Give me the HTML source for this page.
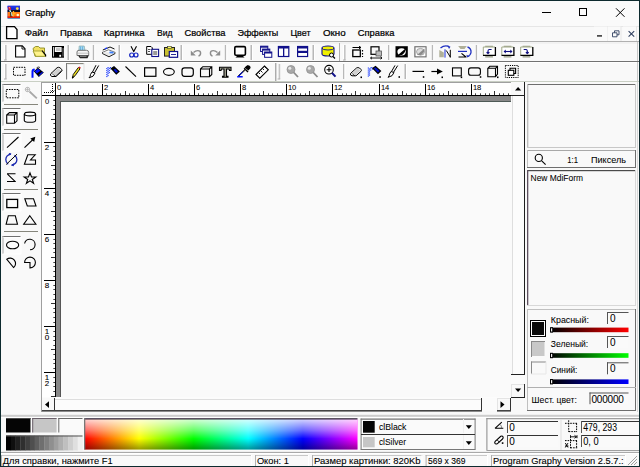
<!DOCTYPE html>
<html><head><meta charset="utf-8"><style>
html,body{margin:0;padding:0;width:640px;height:467px;overflow:hidden;background:#f9f9f9}
svg{display:block}
text{font-family:"Liberation Sans", sans-serif;stroke:currentColor;stroke-width:0.22px}
</style></head><body>
<svg width="640" height="467" viewBox="0 0 640 467">
<rect x="0" y="0" width="640" height="467" fill="#f9f9f9" />
<rect x="1" y="1" width="638" height="25" fill="#fafafa" />
<g>
<rect x="7.6" y="5.8" width="12.4" height="12.6" fill="#1a2ad0"/>
<rect x="7.6" y="5.8" width="12.4" height="2" fill="#2038e8"/>
<rect x="7.6" y="10" width="12.4" height="2.2" fill="#101020"/>
<rect x="7.6" y="12" width="12.4" height="5" fill="#ff7a10"/>
<rect x="7.6" y="16.3" width="12.4" height="1.8" fill="#e02010"/>
<path d="M8 7 L10.3 6.5 L11.2 9.5 L9 10.5 Z" fill="#f02020"/>
<path d="M9.2 8 L9.8 7.5" stroke="#fff" stroke-width="1"/>
<path d="M9.8 10 L12.2 16" stroke="#bff" stroke-width="1.3"/>
<path d="M10.5 12 L11 17" stroke="#000" stroke-width="0.8"/>
<path d="M13.5 11 V16.5 M12.5 13.5 H15.5" stroke="#ffb020" stroke-width="1.3"/>
<circle cx="17.3" cy="8.6" r="1.4" fill="#ffe040"/>
<circle cx="17.8" cy="15" r="1.3" fill="#fff8d0"/>
<rect x="7.6" y="18" width="12.4" height="0.6" fill="#40a0c0"/>
</g>
<text x="24.9" y="16" font-size="9.5" fill="#000"  textLength="30.3" lengthAdjust="spacingAndGlyphs">Graphy</text>
<rect x="542" y="12" width="9" height="1" fill="#000"/>
<rect x="579.5" y="8.5" width="7" height="7" fill="none" stroke="#000" stroke-width="1"/>
<path d="M616 8.3 L624.5 16.8 M624.5 8.3 L616 16.8" stroke="#000" stroke-width="1"/>
<rect x="1" y="26" width="638" height="1" fill="#e6e6e6"/>
<path d="M6.6 26.6 H14.5 L17 29.5 V38.6 H6.6 Z" fill="#fff" stroke="#000" stroke-width="1.3"/>
<text x="24.7" y="36" font-size="9.5" fill="#000"  textLength="23.4" lengthAdjust="spacingAndGlyphs">Файл</text>
<text x="60" y="36" font-size="9.5" fill="#000"  textLength="32" lengthAdjust="spacingAndGlyphs">Правка</text>
<text x="103.8" y="36" font-size="9.5" fill="#000"  textLength="40.75" lengthAdjust="spacingAndGlyphs">Картинка</text>
<text x="157" y="36" font-size="9.5" fill="#000"  textLength="15.5" lengthAdjust="spacingAndGlyphs">Вид</text>
<text x="184.5" y="36" font-size="9.5" fill="#000"  textLength="41" lengthAdjust="spacingAndGlyphs">Свойства</text>
<text x="237.5" y="36" font-size="9.5" fill="#000"  textLength="40.75" lengthAdjust="spacingAndGlyphs">Эффекты</text>
<text x="290.5" y="36" font-size="9.5" fill="#000"  textLength="20" lengthAdjust="spacingAndGlyphs">Цвет</text>
<text x="322.9" y="36" font-size="9.5" fill="#000"  textLength="22.7" lengthAdjust="spacingAndGlyphs">Окно</text>
<text x="357.8" y="36" font-size="9.5" fill="#000"  textLength="36.6" lengthAdjust="spacingAndGlyphs">Справка</text>
<rect x="594" y="26.5" width="13" height="14" fill="#fafafa" />
<rect x="607" y="27" width="1" height="14" fill="#e8e8e8"/>
<rect x="607.5" y="26.5" width="13" height="14" fill="#fafafa" />
<rect x="620.5" y="27" width="1" height="14" fill="#e8e8e8"/>
<rect x="623" y="26.5" width="13" height="14" fill="#fafafa" />
<rect x="636" y="27" width="1" height="14" fill="#e8e8e8"/>
<rect x="597" y="35.2" width="5" height="1.4" fill="#222"/>
<path d="M612.5 32.8 h4.5 v4 h-4.5 z M614.5 32.8 v-2 h4.5 v4 h-2" fill="none" stroke="#304060" stroke-width="0.9"/>
<path d="M628.6 31.2 L634.2 36.6 M634.2 31.2 L628.6 36.6" stroke="#304060" stroke-width="1.1"/>
<rect x="1" y="41" width="638" height="1" fill="#b0b0b0"/>
<rect x="1" y="42.5" width="638" height="1" fill="#ececec"/>
<rect x="1" y="61" width="638" height="1" fill="#727272"/>
<rect x="1" y="62" width="638" height="1" fill="#ffffff"/>
<rect x="1" y="81" width="638" height="1" fill="#c9cfc4"/>
<rect x="637" y="42" width="1" height="19" fill="#c8c8c8"/>
<rect x="637" y="62" width="1" height="19" fill="#c8c8c8"/>
<rect x="4" y="45" width="1" height="15" fill="#ffffff"/>
<rect x="5" y="45" width="1.6" height="15" fill="#c4c4c4"/>
<rect x="4" y="59.5" width="2.5999999999999996" height="1" fill="#b0b0b0"/>
<rect x="4" y="64" width="1" height="15" fill="#ffffff"/>
<rect x="5" y="64" width="1.6" height="15" fill="#c4c4c4"/>
<rect x="4" y="78.5" width="2.5999999999999996" height="1" fill="#b0b0b0"/>
<rect x="67.5" y="45" width="1.5" height="15" fill="#b8b8b8"/>
<rect x="69" y="45" width="1" height="15" fill="#ffffff"/>
<rect x="92.8" y="45" width="1.5" height="15" fill="#b8b8b8"/>
<rect x="94.3" y="45" width="1" height="15" fill="#ffffff"/>
<rect x="118.5" y="45" width="1.5" height="15" fill="#b8b8b8"/>
<rect x="120" y="45" width="1" height="15" fill="#ffffff"/>
<rect x="180.5" y="45" width="1.5" height="15" fill="#b8b8b8"/>
<rect x="182" y="45" width="1" height="15" fill="#ffffff"/>
<rect x="224.8" y="45" width="1.5" height="15" fill="#b8b8b8"/>
<rect x="226.3" y="45" width="1" height="15" fill="#ffffff"/>
<rect x="250.5" y="45" width="1.5" height="15" fill="#b8b8b8"/>
<rect x="252" y="45" width="1" height="15" fill="#ffffff"/>
<rect x="312.5" y="45" width="1.5" height="15" fill="#b8b8b8"/>
<rect x="314" y="45" width="1" height="15" fill="#ffffff"/>
<rect x="339" y="43" width="1" height="18" fill="#b0b0b0"/>
<rect x="343" y="45" width="1" height="15" fill="#ffffff"/>
<rect x="344" y="45" width="1.6" height="15" fill="#c4c4c4"/>
<rect x="343" y="59.5" width="2.6000000000000227" height="1" fill="#b0b0b0"/>
<rect x="388.0" y="45" width="1.5" height="15" fill="#b8b8b8"/>
<rect x="389.5" y="45" width="1" height="15" fill="#ffffff"/>
<rect x="431.8" y="45" width="1.5" height="15" fill="#b8b8b8"/>
<rect x="433.3" y="45" width="1" height="15" fill="#ffffff"/>
<rect x="475.8" y="45" width="1.5" height="15" fill="#b8b8b8"/>
<rect x="477.3" y="45" width="1" height="15" fill="#ffffff"/>
<path d="M15.6 45.9 H22.3 L25 48.7 V57 H15.6 Z" fill="#fff" stroke="#000" stroke-width="1.1"/>
<path d="M22 46 V49 H25" fill="none" stroke="#000" stroke-width="0.9"/>
<path d="M33 48.5 L35.5 46.5 L38.5 46.5 L40 48 L44.5 48 L44.5 56.3 L35 56.3 Z" fill="#f2e060" stroke="#8a8a20" stroke-width="0.9"/>
<path d="M33 51 L42 51 L45.5 56.3 L36 56.3 Z" fill="#fff38a" stroke="#9a9a30" stroke-width="0.8"/>
<path d="M42 50.5 L45.6 55 L45.6 56.5" stroke="#000" stroke-width="1.2" fill="none"/>
<rect x="52" y="46" width="12" height="11.7" fill="#000"/>
<rect x="53" y="47" width="1" height="9.5" fill="#c8c8c8"/>
<rect x="62.6" y="48" width="0.9" height="8.5" fill="#909090"/>
<rect x="54.8" y="47.1" width="6.8" height="4.9" fill="#fff"/>
<rect x="56" y="48.1" width="4.5" height="3" fill="#c4c4c4"/>
<rect x="59.3" y="54.8" width="1.8" height="2" fill="#fff"/>
<path d="M78.8 50.5 L79.2 46 H84.2 L85 50.5 Z" fill="#a8d8f0" stroke="#8aa" stroke-width="0.7"/>
<path d="M80.5 46.5 V50 M82.5 46.5 V50" stroke="#60b0e0" stroke-width="0.8"/>
<path d="M77 52 Q77 50.3 79 50.3 H86.5 Q88.7 50.3 88.7 52.5 V55.5 H77 Z" fill="#f4f4f4" stroke="#555" stroke-width="0.8"/>
<path d="M77 53.2 H88.5" stroke="#aaa" stroke-width="0.7"/>
<path d="M78 55.5 H88.7 L87.5 58.3 H80 Z" fill="#222"/>
<path d="M80 56.3 H86.5" stroke="#ddd" stroke-width="0.6"/>
<path d="M102.5 52.3 L108.5 49.8 L115 52.3 L109 55.3 Z" fill="#fff" stroke="#444" stroke-width="0.7"/>
<path d="M102.5 52.3 V53.6 L109 56.8 L115 53.6 V52.3" fill="#e8e8e8" stroke="#111" stroke-width="0.9"/>
<path d="M102.8 50 L110 47 L114.5 49" fill="none" stroke="#111" stroke-width="1"/>
<path d="M104.8 48.9 L107.2 47.9" stroke="#2040ff" stroke-width="1.2"/>
<path d="M109.5 52.3 L113.5 52.6" stroke="#3a80ff" stroke-width="1.8"/>
<path d="M131 46.3 L134 52 M136.5 46.3 L133.5 52" stroke="#000" stroke-width="1.1"/>
<circle cx="131.7" cy="55" r="2" fill="none" stroke="#1020c0" stroke-width="1.2"/>
<circle cx="136" cy="55" r="2" fill="none" stroke="#1020c0" stroke-width="1.2"/>
<path d="M146.7 46.5 H151 L152.3 47.8 V54.3 H146.7 Z" fill="#fff" stroke="#000" stroke-width="1"/>
<path d="M148 49.5 H150.5 M148 51.5 H150" stroke="#000" stroke-width="0.7"/>
<rect x="151.8" y="49.3" width="6.8" height="7.2" fill="#fff" stroke="#10108a" stroke-width="1.1"/>
<path d="M153.2 52 H157.2 M153.2 54 H157.2" stroke="#000" stroke-width="0.8"/>
<rect x="164.5" y="47.5" width="10" height="8.6" fill="#c8c030" stroke="#222" stroke-width="1"/>
<rect x="167.5" y="46.3" width="4" height="2.2" fill="#ffff60" stroke="#333" stroke-width="0.6"/>
<rect x="169.3" y="51.5" width="8.3" height="5.8" fill="#fff" stroke="#10108a" stroke-width="1.2"/>
<path d="M171 54.5 H176" stroke="#10108a" stroke-width="0.9"/>
<path d="M190.8 50.6 L195.8 55.6 H190.8 Z" fill="#8c8c8c"/>
<path d="M193.5 52.6 Q195.5 50.6 197.8 50.6 Q200.6 50.6 200.6 53 Q200.6 55.6 198.5 56" fill="none" stroke="#8c8c8c" stroke-width="1.4"/>
<path d="M220.2 50.6 L215.2 55.6 H220.2 Z" fill="#8c8c8c"/>
<path d="M217.5 52.6 Q215.5 50.6 213.2 50.6 Q210.4 50.6 210.4 53 Q210.4 55.6 212.5 56" fill="none" stroke="#8c8c8c" stroke-width="1.4"/>
<rect x="234.8" y="46.6" width="10.6" height="8.6" rx="1.2" fill="#fff" stroke="#000" stroke-width="1.6"/>
<path d="M237.5 55.5 H242.5 L244.5 57.5 H235.5 Z" fill="#000"/>
<rect x="260.6" y="46.2" width="7.2" height="5.3" fill="#fff" stroke="#10108a" stroke-width="1"/>
<rect x="260.6" y="46.2" width="7.2" height="1.5" fill="#10108a"/>
<rect x="262.6" y="49.1" width="7.2" height="5.3" fill="#fff" stroke="#10108a" stroke-width="1"/>
<rect x="262.6" y="49.1" width="7.2" height="1.5" fill="#10108a"/>
<rect x="264.6" y="52" width="7.2" height="5.3" fill="#fff" stroke="#10108a" stroke-width="1"/>
<rect x="264.6" y="52" width="7.2" height="1.5" fill="#10108a"/>
<rect x="278.4" y="46.5" width="10.4" height="10" fill="#fff" stroke="#10108a" stroke-width="1.2"/>
<rect x="278.4" y="46.5" width="10.4" height="2" fill="#10108a"/>
<rect x="283" y="46.5" width="1.3" height="10" fill="#10108a"/>
<rect x="297.6" y="46.5" width="10" height="10" fill="#fff" stroke="#10108a" stroke-width="1.2"/>
<rect x="297.6" y="46.5" width="10" height="2" fill="#10108a"/>
<rect x="297.6" y="50.8" width="10" height="2.2" fill="#10108a"/>
<path d="M322 48 Q322 46 328 46 Q334 46 334 48 V54 Q334 56 328 56 Q322 56 322 54 Z" fill="#f0f000" stroke="#10108a" stroke-width="1.1"/>
<path d="M322 48 Q322 50 328 50 Q334 50 334 48" fill="none" stroke="#10108a" stroke-width="0.9"/>
<circle cx="331.5" cy="55" r="2" fill="#fff" stroke="#000" stroke-width="1"/><path d="M333 56.5 L335 58.5" stroke="#000" stroke-width="1.3"/>
<path d="M352.5 47.5 H361 M359 46.3 L361 47.5 L359 48.7" stroke="#000" stroke-width="1" fill="none"/>
<rect x="352.8" y="50" width="7.5" height="6.6" fill="none" stroke="#000" stroke-width="1.3"/>
<path d="M362.5 50 V51.5 M362.5 53 V54.5 M362.5 56 V57" stroke="#000" stroke-width="1.2"/>
<rect x="371" y="46.8" width="8" height="7.5" fill="none" stroke="#000" stroke-width="1.2"/>
<rect x="376" y="51" width="5.5" height="5" fill="#bbb" stroke="#555" stroke-width="0.8"/>
<path d="M370.5 58 H382 M372 56.8 L370.5 58 L372 59.2 M380.5 56.8 L382 58 L380.5 59.2" stroke="#000" stroke-width="0.9" fill="none"/>
<rect x="395.5" y="46.2" width="12.3" height="11.2" fill="#000"/>
<ellipse cx="401.6" cy="51.8" rx="4.2" ry="3.6" fill="#fff"/>
<path d="M398 55 L405.5 48.5 Q406 52 402 55 Z" fill="#000"/>
<rect x="414.3" y="46.2" width="12.3" height="11.2" fill="#6a6a6a"/>
<rect x="415.5" y="47.3" width="10" height="9" fill="#fff"/>
<ellipse cx="420.5" cy="51.8" rx="4" ry="3.4" fill="#ddd" stroke="#888" stroke-width="0.7"/>
<path d="M417 55 L424.5 48.5 Q425 52 421 55 Z" fill="#8a8a8a"/>
<path d="M439.3 50 L443.8 52.5 V57.3 H439.3 Z" fill="#b0b098"/>
<rect x="444.4" y="49.3" width="1.2" height="8.3" fill="#4050e0"/>
<path d="M446.3 50.5 L450.3 57 M450.3 49.8 V57.6" fill="none" stroke="#000" stroke-width="1"/>
<path d="M440.5 48 Q444.5 44.8 449 46.5" fill="none" stroke="#2030c0" stroke-width="1.3"/><path d="M447.3 45.3 L450.5 46.8 L449 49 Z" fill="#2030c0"/>
<path d="M458.2 46 H466.8 L464.5 49 H460.5 Z" fill="#b0b098"/>
<rect x="458" y="50.8" width="9" height="1.2" fill="#2030c0"/>
<path d="M458.5 57 H466.5 M461.5 53.3 L466 57" fill="none" stroke="#000" stroke-width="1.1"/>
<path d="M467.5 46.8 Q471.5 48.5 471 52.5 Q470.5 55.5 467.5 56.5" fill="none" stroke="#2030c0" stroke-width="1.3"/><path d="M466.3 54.8 L467.3 57.5 L469.6 56.3 Z" fill="#2030c0"/>
<rect x="485.2" y="45.7" width="7.7" height="1.4" fill="#a8ac98"/>
<rect x="485.2" y="55.9" width="7.7" height="1.7" fill="#a8ac98"/>
<rect x="483.3" y="47" width="12.2" height="8.5" fill="#fff"/>
<path d="M483.3 55.3 V47 H495.0" fill="none" stroke="#a0a888" stroke-width="1"/>
<path d="M483.0 55.3 H495.40000000000003 V47" fill="none" stroke="#000" stroke-width="1.3"/>
<path d="M491.6 49.5 H489.1 Q488.0 49.7 488.0 51.2 V53.3 M486.6 52.3 L488.0 53.5 L489.40000000000003 52.3" fill="none" stroke="#101080" stroke-width="1.2"/>
<rect x="503.7" y="45.7" width="7.7" height="1.4" fill="#a8ac98"/>
<rect x="503.7" y="55.9" width="7.7" height="1.7" fill="#a8ac98"/>
<rect x="501.8" y="47" width="12.2" height="8.5" fill="#fff"/>
<path d="M501.8 55.3 V47 H513.5" fill="none" stroke="#a0a888" stroke-width="1"/>
<path d="M501.5 55.3 H513.9 V47" fill="none" stroke="#000" stroke-width="1.3"/>
<path d="M504.3 51.5 H511.8" stroke="#101080" stroke-width="1.1"/><path d="M503.6 51.5 L505.8 49.6 V53.4 Z M512.5 51.5 L510.3 49.6 V53.4 Z" fill="#101080"/>
<rect x="522.6" y="45.7" width="7.7" height="1.4" fill="#a8ac98"/>
<rect x="522.6" y="55.9" width="7.7" height="1.7" fill="#a8ac98"/>
<rect x="520.7" y="47" width="12.2" height="8.5" fill="#fff"/>
<path d="M520.7 55.3 V47 H532.4000000000001" fill="none" stroke="#a0a888" stroke-width="1"/>
<path d="M520.4000000000001 55.3 H532.8000000000001 V47" fill="none" stroke="#000" stroke-width="1.3"/>
<path d="M523.7 49.5 H526.2 Q527.3000000000001 49.7 527.3000000000001 51.2 V53.3 M525.9000000000001 52.3 L527.3000000000001 53.5 L528.7 52.3" fill="none" stroke="#101080" stroke-width="1.2"/>
<rect x="66.5" y="63.5" width="18.5" height="16" fill="#fbfbfb" />
<rect x="66" y="63" width="18" height="1" fill="#8a8a80"/>
<rect x="66" y="63" width="1" height="17" fill="#7a7a7a"/>
<rect x="67" y="64" width="17" height="1" fill="#ececec"/>
<rect x="67" y="64" width="1" height="16" fill="#ececec"/>
<rect x="83.5" y="63" width="1" height="17" fill="#e0e0e0"/>
<rect x="66" y="79.5" width="18" height="1" fill="#ffffff"/>
<rect x="275.3" y="63" width="1" height="18" fill="#8c8c8c"/>
<rect x="277.6" y="64" width="1" height="15" fill="#ffffff"/>
<rect x="278.6" y="64" width="1.6" height="15" fill="#c4c4c4"/>
<rect x="277.6" y="78.5" width="2.6000000000000227" height="1" fill="#b0b0b0"/>
<rect x="343.0" y="64" width="1.5" height="15" fill="#b8b8b8"/>
<rect x="344.5" y="64" width="1" height="15" fill="#ffffff"/>
<rect x="404.5" y="64" width="1.5" height="15" fill="#b8b8b8"/>
<rect x="406" y="64" width="1" height="15" fill="#ffffff"/>
<rect x="13.5" y="67.3" width="11.5" height="8" fill="none" stroke="#000" stroke-width="1" stroke-dasharray="1.6 1"/>
<path d="M34.5 68.6 Q31.5 68.8 31.5 71.5 V77.8 H33.5 V72 Q33.5 70.5 35 70.3 Z" fill="#0010ff"/>
<path d="M38 67.8 L43.8 72.4 L38.8 77 L33.8 71.2 Z" fill="#000"/>
<path d="M34.8 71.2 L38 68.8 L40.5 70.8 L36.8 73.6 Z" fill="#0010ff"/>
<path d="M39.2 76 L43 72.5 L42.2 71.8 L38.4 75.2 Z" fill="#0010ff"/>
<path d="M36.5 68 Q38 66.2 40 67.5" fill="none" stroke="#333" stroke-width="0.9"/>
<path d="M50.5 74 L57 67.8 Q58.5 66.8 60 67.8 L61.8 69.5 Q62.5 70.5 61.5 71.5 L56 76.5 H52 Q50 76 50.5 74 Z" fill="#fff" stroke="#000" stroke-width="1"/>
<path d="M51.5 73 L55 76 M55 76.5 L61.5 70.5" fill="none" stroke="#000" stroke-width="0.8"/>
<path d="M52 73.5 L58 68 L61 70.5 L55.5 75.8 Z" fill="#d0d0d0"/>
<path d="M72.5 78 L73.2 74.5 L78.3 67.5 L80 68.8 L75 75.8 Z" fill="#f0e020" stroke="#000" stroke-width="0.9"/>
<path d="M78.3 67.5 L79.3 66.5 L80.8 67.6 L80 68.8 Z" fill="#e02020"/>
<path d="M72.3 78.2 L73.3 76.4" stroke="#000" stroke-width="1.2"/>
<path d="M92.5 72 L96 65.2 M94.5 72.8 L98.7 65.5" stroke="#000" stroke-width="1"/>
<path d="M92 72 L95 73 Q94 77 89 77.8 Q90.5 76.5 90.5 74.5 Z" fill="#fff" stroke="#000" stroke-width="1"/>
<rect x="106.3" y="68" width="1.1" height="1.1" fill="#1030ff"/>
<rect x="106.3" y="70" width="1.1" height="1.1" fill="#1030ff"/>
<rect x="106.3" y="72" width="1.1" height="1.1" fill="#1030ff"/>
<rect x="106.3" y="74" width="1.1" height="1.1" fill="#1030ff"/>
<rect x="106.3" y="76" width="1.1" height="1.1" fill="#1030ff"/>
<rect x="107.5" y="67" width="1.1" height="1.1" fill="#1030ff"/>
<rect x="107.5" y="69" width="1.1" height="1.1" fill="#1030ff"/>
<rect x="107.5" y="71" width="1.1" height="1.1" fill="#1030ff"/>
<rect x="107.5" y="73" width="1.1" height="1.1" fill="#1030ff"/>
<rect x="107.5" y="75" width="1.1" height="1.1" fill="#1030ff"/>
<rect x="108.7" y="68" width="1.1" height="1.1" fill="#1030ff"/>
<rect x="108.7" y="70" width="1.1" height="1.1" fill="#1030ff"/>
<rect x="108.7" y="72" width="1.1" height="1.1" fill="#1030ff"/>
<rect x="109.8" y="67" width="1.1" height="1.1" fill="#1030ff"/>
<rect x="110.5" y="68.5" width="1.1" height="1.1" fill="#1030ff"/>
<path d="M111.5 68.5 L114 66.8 L119 71.5 L116.3 73.8 Z" fill="#0010d0" stroke="#000" stroke-width="1.2"/>
<path d="M111.8 68.6 L114 67 L115.5 68.5 L113 70.3 Z" fill="#000"/>
<path d="M125.5 66.5 L136 76.6" stroke="#000" stroke-width="1.1"/>
<rect x="144.6" y="67.8" width="11.3" height="8.5" fill="none" stroke="#000" stroke-width="1.2"/>
<ellipse cx="168.9" cy="71.85" rx="5.4" ry="3.5" fill="none" stroke="#000" stroke-width="1.1"/>
<rect x="182" y="67.8" width="11.3" height="8.5" rx="2.5" fill="none" stroke="#000" stroke-width="1.2"/>
<path d="M200.5 69 L202.8 66.7 H211.8 V74.5 L209.5 76.8 H200.5 Z M200.5 69 H209.5 V76.8 M209.5 69 L211.8 66.7" fill="none" stroke="#000" stroke-width="1.1"/>
<path d="M219.5 67.2 H231 V70.5 H229.5 L229 69 H226.5 V76.2 H228 V77.3 H222.5 V76.2 H224 V69 H221.5 L221 70.5 H219.5 Z" fill="#a0a090" stroke="#000" stroke-width="1.1"/>
<path d="M245.5 67.5 L247.5 65.8 Q249.8 65.5 250 67.8 L248.3 69.6 Z" fill="#000" stroke="#000" stroke-width="1.2"/>
<path d="M244.2 68.3 L248 72 " stroke="#000" stroke-width="1.4"/>
<path d="M245.5 69.8 L239 76 L238.3 76.2 L238.5 75.5 L245 69.3 Z" fill="#fff" stroke="#000" stroke-width="0.9"/>
<rect x="237.2" y="76" width="5.5" height="1.5" fill="#0010ff"/>
<path d="M239 75.5 L242.8 71.8" stroke="#0010ff" stroke-width="1"/>
<path d="M256 74.5 L264.5 66 L268.3 69.8 L259.8 78.2 Z" fill="#fff" stroke="#000" stroke-width="1.1"/>
<path d="M259 73 L260 74 M261 71 L262.5 72.5 M263 69 L264 70 M265 67 L266.5 68.5" stroke="#000" stroke-width="0.9"/>
<circle cx="291.0" cy="69.5" r="4" fill="#a8a8a8" stroke="#909090" stroke-width="0.8"/>
<circle cx="289.8" cy="68.3" r="1.5" fill="#e8e8e8"/>
<path d="M293.8 72.5 L298.0 77" stroke="#8a8a8a" stroke-width="1.8"/>
<circle cx="310.5" cy="69.5" r="4" fill="#a8a8a8" stroke="#909090" stroke-width="0.8"/>
<circle cx="309.3" cy="68.3" r="1.5" fill="#e8e8e8"/>
<path d="M313.3 72.5 L317.5 77" stroke="#8a8a8a" stroke-width="1.8"/>
<circle cx="329" cy="69.7" r="4.3" fill="#fff" stroke="#000" stroke-width="1.1"/>
<path d="M326.6 69.7 H331.4 M329 67.3 V72.1" stroke="#000" stroke-width="1.1"/>
<path d="M332 72.8 L335.5 76.7" stroke="#10108a" stroke-width="2"/>
<path d="M350.5 73.5 L356.5 68 Q358 67.2 359.5 68 L361 69.5 Q361.8 70.5 361 71.3 L356 75.8 H352 Q350 75.5 350.5 73.5 Z" fill="#fff" stroke="#000" stroke-width="1"/>
<path d="M351.5 72.8 L354.8 75.8" stroke="#000" stroke-width="0.8"/><path d="M352 73.3 L357.5 68.3 L360.5 70.6 L355.5 75.3 Z" fill="#d0d0d0"/>
<rect x="360.5" y="76.5" width="1.5" height="1.6" fill="#000"/>
<rect x="367.8" y="67.5" width="1.1" height="1.1" fill="#1030ff"/>
<rect x="367.8" y="69.5" width="1.1" height="1.1" fill="#1030ff"/>
<rect x="367.8" y="71.5" width="1.1" height="1.1" fill="#1030ff"/>
<rect x="367.8" y="73.5" width="1.1" height="1.1" fill="#1030ff"/>
<rect x="367.8" y="75.5" width="1.1" height="1.1" fill="#1030ff"/>
<rect x="369" y="68.5" width="1.1" height="1.1" fill="#1030ff"/>
<rect x="369" y="70.5" width="1.1" height="1.1" fill="#1030ff"/>
<rect x="369" y="72.5" width="1.1" height="1.1" fill="#1030ff"/>
<rect x="369" y="74.5" width="1.1" height="1.1" fill="#1030ff"/>
<rect x="370.2" y="67.5" width="1.1" height="1.1" fill="#1030ff"/>
<rect x="370.2" y="69.5" width="1.1" height="1.1" fill="#1030ff"/>
<rect x="371.3" y="67" width="1.1" height="1.1" fill="#1030ff"/>
<rect x="372" y="68.5" width="1.1" height="1.1" fill="#1030ff"/>
<path d="M373 68.3 L375.5 66.6 L380.5 71 L378 73.3 Z" fill="#0010d0" stroke="#000" stroke-width="1.2"/>
<rect x="379.3" y="76.2" width="1.5" height="1.6" fill="#000"/>
<path d="M391.5 71.5 L395 65.4 M393.5 72.3 L397.7 65.6" stroke="#000" stroke-width="1"/>
<path d="M391 71.5 L394 72.5 Q393 76.5 388 77.3 Q389.5 76 389.5 74 Z" fill="#fff" stroke="#000" stroke-width="1"/>
<rect x="398.5" y="76.2" width="1.5" height="1.6" fill="#000"/>
<path d="M412.5 71.4 H424" stroke="#000" stroke-width="1.2"/>
<rect x="422.8" y="76.2" width="1.5" height="1.6" fill="#000"/>
<path d="M431.4 71.5 H440" stroke="#000" stroke-width="1.2"/><path d="M437 68.6 L442.8 71.5 L437 74.4 Z" fill="#000"/>
<rect x="441.5" y="76.5" width="1.5" height="1.6" fill="#000"/>
<rect x="452.5" y="67.9" width="8.8" height="8" fill="none" stroke="#000" stroke-width="1.1"/>
<rect x="460.7" y="76.5" width="1.5" height="1.6" fill="#000"/>
<rect x="468.6" y="67.9" width="11.8" height="7.4" rx="2.3" fill="none" stroke="#000" stroke-width="1.1"/>
<rect x="479.8" y="76.2" width="1.5" height="1.6" fill="#000"/>
<path d="M487.8 68.3 L489.8 66.3 H497.5 V74 L495.5 76.8 H487.8 Z M487.8 68.3 H495.5 V76.8 M495.5 68.3 L497.5 66.3" fill="none" stroke="#000" stroke-width="1.1"/>
<rect x="497" y="76.5" width="1.5" height="1.6" fill="#000"/>
<rect x="505.4" y="65.5" width="12.8" height="12" fill="none" stroke="#000" stroke-width="1" stroke-dasharray="1.2 1"/>
<rect x="508.3" y="70.3" width="5.5" height="5" fill="#fff" stroke="#000" stroke-width="1.1"/>
<path d="M510 70.3 V68.3 H515.6 V73.5 H513.8" fill="none" stroke="#000" stroke-width="1.1"/>
<rect x="2.5" y="84" width="18.5" height="18" fill="#fbfbfb" />
<rect x="2.5" y="84" width="18.5" height="1" fill="#707070"/>
<rect x="2.5" y="84" width="1" height="18" fill="#a8a8a8"/>
<rect x="3.5" y="85" width="17.5" height="1" fill="#ffffff"/>
<rect x="2.5" y="101.5" width="18.5" height="1" fill="#ffffff"/>
<rect x="20.5" y="84" width="1" height="18" fill="#ffffff"/>
<rect x="2.5" y="108" width="18.5" height="18" fill="#fbfbfb" />
<rect x="2.5" y="108" width="18.5" height="1" fill="#707070"/>
<rect x="2.5" y="108" width="1" height="18" fill="#a8a8a8"/>
<rect x="3.5" y="109" width="17.5" height="1" fill="#ffffff"/>
<rect x="2.5" y="125.5" width="18.5" height="1" fill="#ffffff"/>
<rect x="20.5" y="108" width="1" height="18" fill="#ffffff"/>
<rect x="2.5" y="133" width="18.5" height="18" fill="#fbfbfb" />
<rect x="2.5" y="133" width="18.5" height="1" fill="#707070"/>
<rect x="2.5" y="133" width="1" height="18" fill="#a8a8a8"/>
<rect x="3.5" y="134" width="17.5" height="1" fill="#ffffff"/>
<rect x="2.5" y="150.5" width="18.5" height="1" fill="#ffffff"/>
<rect x="20.5" y="133" width="1" height="18" fill="#ffffff"/>
<rect x="2.5" y="193" width="18.5" height="18" fill="#fbfbfb" />
<rect x="2.5" y="193" width="18.5" height="1" fill="#707070"/>
<rect x="2.5" y="193" width="1" height="18" fill="#a8a8a8"/>
<rect x="3.5" y="194" width="17.5" height="1" fill="#ffffff"/>
<rect x="2.5" y="210.5" width="18.5" height="1" fill="#ffffff"/>
<rect x="20.5" y="193" width="1" height="18" fill="#ffffff"/>
<rect x="2.5" y="236" width="18.5" height="18" fill="#fbfbfb" />
<rect x="2.5" y="236" width="18.5" height="1" fill="#707070"/>
<rect x="2.5" y="236" width="1" height="18" fill="#a8a8a8"/>
<rect x="3.5" y="237" width="17.5" height="1" fill="#ffffff"/>
<rect x="2.5" y="253.5" width="18.5" height="1" fill="#ffffff"/>
<rect x="20.5" y="236" width="1" height="18" fill="#ffffff"/>
<rect x="4" y="104" width="34" height="1" fill="#86867c"/>
<rect x="4" y="129" width="34" height="1" fill="#86867c"/>
<rect x="4" y="189" width="34" height="1" fill="#86867c"/>
<rect x="4" y="231" width="34" height="1" fill="#86867c"/>
<rect x="6.3" y="89.5" width="12.5" height="8.3" fill="none" stroke="#000" stroke-width="1" stroke-dasharray="1.6 1"/>
<circle cx="27.5" cy="89.5" r="2.2" fill="none" stroke="#b0b0b0" stroke-width="0.9"/>
<path d="M25.3 89.5 H29.7 M27.5 87.3 V91.7" stroke="#b0b0b0" stroke-width="0.7"/>
<path d="M29.5 91.5 L36.8 98.3" stroke="#a8a8a8" stroke-width="1.8"/>
<path d="M6.7 115 L9.5 112.6 H17 V120.8 L14.5 123.3 H6.7 Z M6.7 115 H14.5 V123.3 M14.5 115 L17 112.6" fill="none" stroke="#000" stroke-width="1.1"/>
<path d="M24.3 114 V120.5 Q24.3 122.3 30 122.3 Q35.6 122.3 35.6 120.5 V114" fill="none" stroke="#000" stroke-width="1.1"/>
<ellipse cx="30" cy="114" rx="5.6" ry="1.9" fill="none" stroke="#000" stroke-width="1.1"/>
<path d="M7 147.6 L18.5 137" stroke="#000" stroke-width="1.1"/>
<path d="M24.5 147.6 L33 139.5" stroke="#000" stroke-width="1.1"/><path d="M35.3 136.8 L34.2 142 L30.3 138.5 Z" fill="#000"/>
<path d="M14.5 155.2 Q17 156.8 16.9 159.8 Q16.7 164.2 11.5 165.1" fill="none" stroke="#1a28b0" stroke-width="1.3"/>
<path d="M8.2 164.2 Q5.7 162.5 5.8 159.6 Q6 155 11 154.2" fill="none" stroke="#1a28b0" stroke-width="1.3"/>
<path d="M14 163.3 L11.2 165.6 L13.8 166.3 Z M8.5 156 L11.5 153.6 L9 152.9 Z" fill="#1a28b0"/>
<path d="M6.2 164.5 L17 154.2" stroke="#000" stroke-width="1"/>
<path d="M27.8 154.8 H35.2 L30.5 160 H35.5 V164.3 H24.4 Z" fill="none" stroke="#000" stroke-width="1.1"/>
<path d="M7 173.8 H15.5 M7.5 174.2 L15 181.3 M7 181.5 H15.8" fill="none" stroke="#000" stroke-width="1.1"/>
<path d="M30 172.9 L31.5 177 H35.8 L32.3 179.5 L33.6 183.3 L30 180.8 L26.4 183.3 L27.7 179.5 L24.2 177 H28.5 Z" fill="none" stroke="#000" stroke-width="1.1"/>
<rect x="6.8" y="199.4" width="10.8" height="8.2" fill="none" stroke="#000" stroke-width="1.3"/>
<path d="M24.8 198.7 H33.5 L36 206 H27.3 Z" fill="none" stroke="#000" stroke-width="1.1"/>
<path d="M8.3 215.8 H15.3 L17.5 224.3 H6.1 Z" fill="none" stroke="#000" stroke-width="1.1"/>
<path d="M29.8 215.8 L35.9 224.3 H23.7 Z" fill="none" stroke="#000" stroke-width="1.1"/>
<ellipse cx="12.6" cy="245" rx="6.1" ry="3.8" fill="none" stroke="#000" stroke-width="1.1"/>
<path d="M24.6 243.5 A5.3 5.3 0 1 1 30 249.8" fill="none" stroke="#000" stroke-width="1.1"/>
<path d="M6.8 259.3 A5.2 5.2 0 1 1 13.6 267.6 Z" fill="none" stroke="#000" stroke-width="1.1"/>
<path d="M24.6 262.5 A5.4 5.4 0 1 1 30 267.9 V262.5 Z" fill="none" stroke="#000" stroke-width="1.1"/>
<rect x="41" y="82" width="1" height="330" fill="#a0a0a0"/>
<rect x="41" y="82" width="484" height="1" fill="#a0a0a0"/>
<rect x="42" y="83" width="469" height="13" fill="#ffffff" />
<rect x="42" y="96" width="13" height="301" fill="#ffffff" />
<rect x="56" y="96" width="455" height="6" fill="#888888" />
<rect x="56" y="96" width="5" height="301" fill="#888888" />
<rect x="60" y="101" width="451" height="1" fill="#4e5a56"/>
<rect x="60" y="101" width="1" height="296" fill="#555555"/>
<rect x="61" y="102" width="450" height="295" fill="#fafafa" />
<rect x="42" y="95" width="482" height="1" fill="#000"/>
<rect x="55" y="83" width="1" height="314" fill="#000"/>
<rect x="55" y="84" width="1" height="11" fill="#000"/>
<text x="57" y="90.1" font-size="7.6" fill="#000" style="stroke-width:0.05px" letter-spacing="-0.3">0</text>
<rect x="60" y="93.3" width="1" height="1.7000000000000028" fill="#444"/>
<rect x="65" y="93.3" width="1" height="1.7000000000000028" fill="#444"/>
<rect x="69" y="93.3" width="1" height="1.7000000000000028" fill="#444"/>
<rect x="74" y="93.3" width="1" height="1.7000000000000028" fill="#444"/>
<rect x="78" y="91" width="1" height="4" fill="#333"/>
<rect x="83" y="93.3" width="1" height="1.7000000000000028" fill="#444"/>
<rect x="88" y="93.3" width="1" height="1.7000000000000028" fill="#444"/>
<rect x="92" y="93.3" width="1" height="1.7000000000000028" fill="#444"/>
<rect x="97" y="93.3" width="1" height="1.7000000000000028" fill="#444"/>
<rect x="102" y="84" width="1" height="11" fill="#000"/>
<text x="104" y="90.1" font-size="7.6" fill="#000" style="stroke-width:0.05px" letter-spacing="-0.3">2</text>
<rect x="106" y="93.3" width="1" height="1.7000000000000028" fill="#444"/>
<rect x="111" y="93.3" width="1" height="1.7000000000000028" fill="#444"/>
<rect x="115" y="93.3" width="1" height="1.7000000000000028" fill="#444"/>
<rect x="120" y="93.3" width="1" height="1.7000000000000028" fill="#444"/>
<rect x="125" y="91" width="1" height="4" fill="#333"/>
<rect x="129" y="93.3" width="1" height="1.7000000000000028" fill="#444"/>
<rect x="134" y="93.3" width="1" height="1.7000000000000028" fill="#444"/>
<rect x="138" y="93.3" width="1" height="1.7000000000000028" fill="#444"/>
<rect x="143" y="93.3" width="1" height="1.7000000000000028" fill="#444"/>
<rect x="148" y="84" width="1" height="11" fill="#000"/>
<text x="150" y="90.1" font-size="7.6" fill="#000" style="stroke-width:0.05px" letter-spacing="-0.3">4</text>
<rect x="152" y="93.3" width="1" height="1.7000000000000028" fill="#444"/>
<rect x="157" y="93.3" width="1" height="1.7000000000000028" fill="#444"/>
<rect x="162" y="93.3" width="1" height="1.7000000000000028" fill="#444"/>
<rect x="166" y="93.3" width="1" height="1.7000000000000028" fill="#444"/>
<rect x="171" y="91" width="1" height="4" fill="#333"/>
<rect x="175" y="93.3" width="1" height="1.7000000000000028" fill="#444"/>
<rect x="180" y="93.3" width="1" height="1.7000000000000028" fill="#444"/>
<rect x="185" y="93.3" width="1" height="1.7000000000000028" fill="#444"/>
<rect x="189" y="93.3" width="1" height="1.7000000000000028" fill="#444"/>
<rect x="194" y="84" width="1" height="11" fill="#000"/>
<text x="196" y="90.1" font-size="7.6" fill="#000" style="stroke-width:0.05px" letter-spacing="-0.3">6</text>
<rect x="198" y="93.3" width="1" height="1.7000000000000028" fill="#444"/>
<rect x="203" y="93.3" width="1" height="1.7000000000000028" fill="#444"/>
<rect x="208" y="93.3" width="1" height="1.7000000000000028" fill="#444"/>
<rect x="212" y="93.3" width="1" height="1.7000000000000028" fill="#444"/>
<rect x="217" y="91" width="1" height="4" fill="#333"/>
<rect x="222" y="93.3" width="1" height="1.7000000000000028" fill="#444"/>
<rect x="226" y="93.3" width="1" height="1.7000000000000028" fill="#444"/>
<rect x="231" y="93.3" width="1" height="1.7000000000000028" fill="#444"/>
<rect x="235" y="93.3" width="1" height="1.7000000000000028" fill="#444"/>
<rect x="240" y="84" width="1" height="11" fill="#000"/>
<text x="242" y="90.1" font-size="7.6" fill="#000" style="stroke-width:0.05px" letter-spacing="-0.3">8</text>
<rect x="245" y="93.3" width="1" height="1.7000000000000028" fill="#444"/>
<rect x="249" y="93.3" width="1" height="1.7000000000000028" fill="#444"/>
<rect x="254" y="93.3" width="1" height="1.7000000000000028" fill="#444"/>
<rect x="259" y="93.3" width="1" height="1.7000000000000028" fill="#444"/>
<rect x="263" y="91" width="1" height="4" fill="#333"/>
<rect x="268" y="93.3" width="1" height="1.7000000000000028" fill="#444"/>
<rect x="272" y="93.3" width="1" height="1.7000000000000028" fill="#444"/>
<rect x="277" y="93.3" width="1" height="1.7000000000000028" fill="#444"/>
<rect x="282" y="93.3" width="1" height="1.7000000000000028" fill="#444"/>
<rect x="286" y="84" width="1" height="11" fill="#000"/>
<text x="288" y="90.1" font-size="7.6" fill="#000" style="stroke-width:0.05px" letter-spacing="-0.3">10</text>
<rect x="291" y="93.3" width="1" height="1.7000000000000028" fill="#444"/>
<rect x="295" y="93.3" width="1" height="1.7000000000000028" fill="#444"/>
<rect x="300" y="93.3" width="1" height="1.7000000000000028" fill="#444"/>
<rect x="305" y="93.3" width="1" height="1.7000000000000028" fill="#444"/>
<rect x="309" y="91" width="1" height="4" fill="#333"/>
<rect x="314" y="93.3" width="1" height="1.7000000000000028" fill="#444"/>
<rect x="319" y="93.3" width="1" height="1.7000000000000028" fill="#444"/>
<rect x="323" y="93.3" width="1" height="1.7000000000000028" fill="#444"/>
<rect x="328" y="93.3" width="1" height="1.7000000000000028" fill="#444"/>
<rect x="332" y="84" width="1" height="11" fill="#000"/>
<text x="334" y="90.1" font-size="7.6" fill="#000" style="stroke-width:0.05px" letter-spacing="-0.3">12</text>
<rect x="337" y="93.3" width="1" height="1.7000000000000028" fill="#444"/>
<rect x="342" y="93.3" width="1" height="1.7000000000000028" fill="#444"/>
<rect x="346" y="93.3" width="1" height="1.7000000000000028" fill="#444"/>
<rect x="351" y="93.3" width="1" height="1.7000000000000028" fill="#444"/>
<rect x="355" y="91" width="1" height="4" fill="#333"/>
<rect x="360" y="93.3" width="1" height="1.7000000000000028" fill="#444"/>
<rect x="365" y="93.3" width="1" height="1.7000000000000028" fill="#444"/>
<rect x="369" y="93.3" width="1" height="1.7000000000000028" fill="#444"/>
<rect x="374" y="93.3" width="1" height="1.7000000000000028" fill="#444"/>
<rect x="379" y="84" width="1" height="11" fill="#000"/>
<text x="381" y="90.1" font-size="7.6" fill="#000" style="stroke-width:0.05px" letter-spacing="-0.3">14</text>
<rect x="383" y="93.3" width="1" height="1.7000000000000028" fill="#444"/>
<rect x="388" y="93.3" width="1" height="1.7000000000000028" fill="#444"/>
<rect x="392" y="93.3" width="1" height="1.7000000000000028" fill="#444"/>
<rect x="397" y="93.3" width="1" height="1.7000000000000028" fill="#444"/>
<rect x="402" y="91" width="1" height="4" fill="#333"/>
<rect x="406" y="93.3" width="1" height="1.7000000000000028" fill="#444"/>
<rect x="411" y="93.3" width="1" height="1.7000000000000028" fill="#444"/>
<rect x="415" y="93.3" width="1" height="1.7000000000000028" fill="#444"/>
<rect x="420" y="93.3" width="1" height="1.7000000000000028" fill="#444"/>
<rect x="425" y="84" width="1" height="11" fill="#000"/>
<text x="427" y="90.1" font-size="7.6" fill="#000" style="stroke-width:0.05px" letter-spacing="-0.3">16</text>
<rect x="429" y="93.3" width="1" height="1.7000000000000028" fill="#444"/>
<rect x="434" y="93.3" width="1" height="1.7000000000000028" fill="#444"/>
<rect x="439" y="93.3" width="1" height="1.7000000000000028" fill="#444"/>
<rect x="443" y="93.3" width="1" height="1.7000000000000028" fill="#444"/>
<rect x="448" y="91" width="1" height="4" fill="#333"/>
<rect x="452" y="93.3" width="1" height="1.7000000000000028" fill="#444"/>
<rect x="457" y="93.3" width="1" height="1.7000000000000028" fill="#444"/>
<rect x="462" y="93.3" width="1" height="1.7000000000000028" fill="#444"/>
<rect x="466" y="93.3" width="1" height="1.7000000000000028" fill="#444"/>
<rect x="471" y="84" width="1" height="11" fill="#000"/>
<text x="473" y="90.1" font-size="7.6" fill="#000" style="stroke-width:0.05px" letter-spacing="-0.3">18</text>
<rect x="475" y="93.3" width="1" height="1.7000000000000028" fill="#444"/>
<rect x="480" y="93.3" width="1" height="1.7000000000000028" fill="#444"/>
<rect x="485" y="93.3" width="1" height="1.7000000000000028" fill="#444"/>
<rect x="489" y="93.3" width="1" height="1.7000000000000028" fill="#444"/>
<rect x="494" y="91" width="1" height="4" fill="#333"/>
<rect x="499" y="93.3" width="1" height="1.7000000000000028" fill="#444"/>
<rect x="503" y="93.3" width="1" height="1.7000000000000028" fill="#444"/>
<rect x="508" y="93.3" width="1" height="1.7000000000000028" fill="#444"/>
<text x="45" y="103.9" font-size="7.6" fill="#000" style="stroke-width:0.05px">0</text>
<rect x="53.3" y="100" width="1.7000000000000028" height="1" fill="#444"/>
<rect x="53.3" y="105" width="1.7000000000000028" height="1" fill="#444"/>
<rect x="53.3" y="109" width="1.7000000000000028" height="1" fill="#444"/>
<rect x="53.3" y="114" width="1.7000000000000028" height="1" fill="#444"/>
<rect x="51" y="119" width="4" height="1" fill="#333"/>
<rect x="53.3" y="123" width="1.7000000000000028" height="1" fill="#444"/>
<rect x="53.3" y="128" width="1.7000000000000028" height="1" fill="#444"/>
<rect x="53.3" y="132" width="1.7000000000000028" height="1" fill="#444"/>
<rect x="53.3" y="137" width="1.7000000000000028" height="1" fill="#444"/>
<rect x="44" y="142" width="11" height="1" fill="#000"/>
<text x="44.8" y="150.0" font-size="8" fill="#000" style="stroke-width:0.1px">2</text>
<rect x="53.3" y="146" width="1.7000000000000028" height="1" fill="#444"/>
<rect x="53.3" y="151" width="1.7000000000000028" height="1" fill="#444"/>
<rect x="53.3" y="156" width="1.7000000000000028" height="1" fill="#444"/>
<rect x="53.3" y="160" width="1.7000000000000028" height="1" fill="#444"/>
<rect x="51" y="165" width="4" height="1" fill="#333"/>
<rect x="53.3" y="169" width="1.7000000000000028" height="1" fill="#444"/>
<rect x="53.3" y="174" width="1.7000000000000028" height="1" fill="#444"/>
<rect x="53.3" y="179" width="1.7000000000000028" height="1" fill="#444"/>
<rect x="53.3" y="183" width="1.7000000000000028" height="1" fill="#444"/>
<rect x="44" y="188" width="11" height="1" fill="#000"/>
<text x="44.8" y="196.0" font-size="8" fill="#000" style="stroke-width:0.1px">4</text>
<rect x="53.3" y="192" width="1.7000000000000028" height="1" fill="#444"/>
<rect x="53.3" y="197" width="1.7000000000000028" height="1" fill="#444"/>
<rect x="53.3" y="202" width="1.7000000000000028" height="1" fill="#444"/>
<rect x="53.3" y="206" width="1.7000000000000028" height="1" fill="#444"/>
<rect x="51" y="211" width="4" height="1" fill="#333"/>
<rect x="53.3" y="216" width="1.7000000000000028" height="1" fill="#444"/>
<rect x="53.3" y="220" width="1.7000000000000028" height="1" fill="#444"/>
<rect x="53.3" y="225" width="1.7000000000000028" height="1" fill="#444"/>
<rect x="53.3" y="229" width="1.7000000000000028" height="1" fill="#444"/>
<rect x="44" y="234" width="11" height="1" fill="#000"/>
<text x="44.8" y="242.0" font-size="8" fill="#000" style="stroke-width:0.1px">6</text>
<rect x="53.3" y="239" width="1.7000000000000028" height="1" fill="#444"/>
<rect x="53.3" y="243" width="1.7000000000000028" height="1" fill="#444"/>
<rect x="53.3" y="248" width="1.7000000000000028" height="1" fill="#444"/>
<rect x="53.3" y="252" width="1.7000000000000028" height="1" fill="#444"/>
<rect x="51" y="257" width="4" height="1" fill="#333"/>
<rect x="53.3" y="262" width="1.7000000000000028" height="1" fill="#444"/>
<rect x="53.3" y="266" width="1.7000000000000028" height="1" fill="#444"/>
<rect x="53.3" y="271" width="1.7000000000000028" height="1" fill="#444"/>
<rect x="53.3" y="276" width="1.7000000000000028" height="1" fill="#444"/>
<rect x="44" y="280" width="11" height="1" fill="#000"/>
<text x="44.8" y="288.0" font-size="8" fill="#000" style="stroke-width:0.1px">8</text>
<rect x="53.3" y="285" width="1.7000000000000028" height="1" fill="#444"/>
<rect x="53.3" y="289" width="1.7000000000000028" height="1" fill="#444"/>
<rect x="53.3" y="294" width="1.7000000000000028" height="1" fill="#444"/>
<rect x="53.3" y="299" width="1.7000000000000028" height="1" fill="#444"/>
<rect x="51" y="303" width="4" height="1" fill="#333"/>
<rect x="53.3" y="308" width="1.7000000000000028" height="1" fill="#444"/>
<rect x="53.3" y="312" width="1.7000000000000028" height="1" fill="#444"/>
<rect x="53.3" y="317" width="1.7000000000000028" height="1" fill="#444"/>
<rect x="53.3" y="322" width="1.7000000000000028" height="1" fill="#444"/>
<rect x="44" y="326" width="11" height="1" fill="#000"/>
<text x="44.8" y="334.0" font-size="8" fill="#000" style="stroke-width:0.1px">1</text>
<text x="44.8" y="340.0" font-size="8" fill="#000" style="stroke-width:0.1px">0</text>
<rect x="53.3" y="331" width="1.7000000000000028" height="1" fill="#444"/>
<rect x="53.3" y="336" width="1.7000000000000028" height="1" fill="#444"/>
<rect x="53.3" y="340" width="1.7000000000000028" height="1" fill="#444"/>
<rect x="53.3" y="345" width="1.7000000000000028" height="1" fill="#444"/>
<rect x="51" y="349" width="4" height="1" fill="#333"/>
<rect x="53.3" y="354" width="1.7000000000000028" height="1" fill="#444"/>
<rect x="53.3" y="359" width="1.7000000000000028" height="1" fill="#444"/>
<rect x="53.3" y="363" width="1.7000000000000028" height="1" fill="#444"/>
<rect x="53.3" y="368" width="1.7000000000000028" height="1" fill="#444"/>
<rect x="44" y="372" width="11" height="1" fill="#000"/>
<text x="44.8" y="380.0" font-size="8" fill="#000" style="stroke-width:0.1px">1</text>
<text x="44.8" y="386.0" font-size="8" fill="#000" style="stroke-width:0.1px">2</text>
<rect x="53.3" y="377" width="1.7000000000000028" height="1" fill="#444"/>
<rect x="53.3" y="382" width="1.7000000000000028" height="1" fill="#444"/>
<rect x="53.3" y="386" width="1.7000000000000028" height="1" fill="#444"/>
<rect x="53.3" y="391" width="1.7000000000000028" height="1" fill="#444"/>
<rect x="51" y="396" width="4" height="1" fill="#333"/>
<rect x="52" y="84" width="1" height="1" fill="#000"/>
<rect x="52" y="86" width="1" height="1" fill="#000"/>
<rect x="52" y="88" width="1" height="1" fill="#000"/>
<rect x="52" y="90" width="1" height="1" fill="#000"/>
<rect x="52" y="92" width="1" height="1" fill="#000"/>
<rect x="44" y="92" width="1" height="1" fill="#000"/>
<rect x="46" y="92" width="1" height="1" fill="#000"/>
<rect x="48" y="92" width="1" height="1" fill="#000"/>
<rect x="50" y="92" width="1" height="1" fill="#000"/>
<path d="M50.5 90.5 L52.5 92.5 L54.5 90.5" fill="none" stroke="#000" stroke-width="0.8"/>
<rect x="511" y="82" width="14" height="316" fill="#fafafa" />
<rect x="511" y="82" width="14" height="14" fill="#f9f9f9" />
<rect x="524" y="82" width="1" height="293" fill="#1e1e1e"/>
<rect x="524" y="384" width="1" height="14" fill="#333"/>
<path d="M515 90.5 L518.1 87 L521.2 90.5 Z" fill="#000"/>
<rect x="511" y="95" width="14" height="1" fill="#222"/>
<rect x="512" y="96" width="12" height="279" fill="#fcfcfc" />
<rect x="512" y="96" width="1" height="279" fill="#dedede"/>
<rect x="511" y="374" width="14" height="1" fill="#222"/>
<rect x="511" y="375" width="13" height="9" fill="#fbfbfb" />
<rect x="511" y="384" width="13" height="14" fill="#f9f9f9" />
<rect x="511" y="384" width="13" height="1" fill="#e4e4e4"/>
<rect x="511" y="384" width="1" height="13" fill="#e4e4e4"/>
<rect x="511" y="397" width="14" height="1" fill="#222"/>
<path d="M515 388.5 L518.1 392 L521.2 388.5 Z" fill="#000"/>
<rect x="42" y="397" width="469" height="14" fill="#fcfcfc" />
<rect x="42" y="398" width="12" height="13" fill="#f9f9f9" />
<rect x="54" y="398" width="1" height="13" fill="#333"/>
<path d="M49 401.3 L45 404.6 L49 408 Z" fill="#000"/>
<rect x="55" y="399" width="426" height="1" fill="#dedede"/>
<rect x="481" y="398" width="1" height="13" fill="#333"/>
<rect x="42" y="410" width="440" height="1.6" fill="#444"/>
<rect x="482" y="398" width="15" height="13" fill="#fbfbfb" />
<rect x="497" y="398" width="14" height="13" fill="#f9f9f9" />
<rect x="497" y="398" width="14" height="1" fill="#e4e4e4"/>
<rect x="497" y="398" width="1" height="13" fill="#e4e4e4"/>
<rect x="510" y="398" width="1" height="13" fill="#333"/>
<rect x="497" y="410" width="14" height="1.6" fill="#444"/>
<path d="M500.5 401.3 L504.5 404.6 L500.5 408 Z" fill="#000"/>
<rect x="525" y="82" width="114" height="330" fill="#f9f9f9" />
<rect x="637" y="82" width="1" height="330" fill="#d8d8d8"/>
<rect x="528" y="85" width="107" height="62" fill="#f9f9f9" />
<rect x="528" y="84" width="108" height="1" fill="#6e6e6e"/>
<rect x="527" y="84" width="1" height="64" fill="#bdbdbd"/>
<rect x="528" y="85" width="1" height="62" fill="#e4e4e4"/>
<rect x="527" y="147" width="109" height="1" fill="#c8c8c8"/>
<rect x="635" y="84" width="1" height="64" fill="#c8c8c8"/>
<rect x="527" y="150" width="109" height="1" fill="#a8a8a8"/>
<rect x="527" y="150" width="1" height="18" fill="#c0c0c0"/>
<rect x="527" y="167" width="109" height="1" fill="#6e6e6e"/>
<rect x="635" y="150" width="1" height="18" fill="#6e6e6e"/>
<circle cx="538.8" cy="157.9" r="3.6" fill="none" stroke="#000" stroke-width="1.1"/>
<path d="M541.5 160.6 L545.6 164.7" stroke="#000" stroke-width="1.1"/>
<text x="567.2" y="162.8" font-size="9.5" fill="#000" style="stroke-width:0.05px" textLength="10.8" lengthAdjust="spacingAndGlyphs">1:1</text>
<text x="591" y="162.8" font-size="9.5" fill="#000" style="stroke-width:0.05px" textLength="35" lengthAdjust="spacingAndGlyphs">Пиксель</text>
<rect x="528" y="171" width="107" height="134" fill="#f9f9f9" />
<rect x="527" y="170" width="109" height="1.2" fill="#4a4a4a"/>
<rect x="527" y="170" width="1.3" height="136" fill="#5e5060"/>
<rect x="527" y="305" width="109" height="1" fill="#d8d8d8"/>
<rect x="635" y="170" width="1" height="136" fill="#d8d8d8"/>
<text x="530.6" y="180.9" font-size="9" fill="#000" style="stroke-width:0.05px" textLength="52.4" lengthAdjust="spacingAndGlyphs">New MdiForm</text>
<rect x="527" y="309" width="109" height="1" fill="#c0c0c0"/>
<rect x="527" y="309" width="1" height="102" fill="#c0c0c0"/>
<rect x="527" y="410" width="109" height="1" fill="#6e6e6e"/>
<rect x="635" y="309" width="1" height="102" fill="#6e6e6e"/>
<rect x="530" y="320" width="16" height="17" fill="#000" />
<rect x="531" y="321" width="14" height="15" fill="#fff" />
<rect x="532" y="322" width="12" height="13" fill="#0a0a0a" />
<rect x="532" y="341.5" width="12.5" height="14.5" fill="#c8c8c8" />
<rect x="531" y="341" width="14" height="1" fill="#8a8a8a"/>
<rect x="531" y="341" width="1" height="16" fill="#8a8a8a"/>
<rect x="532" y="362" width="13" height="12" fill="#f9f9f9" />
<rect x="531" y="361.5" width="15" height="1" fill="#8a8a8a"/>
<rect x="531" y="361.5" width="1" height="12.5" fill="#8a8a8a"/>
<rect x="531" y="373.5" width="15" height="1" fill="#e8e8e8"/>
<rect x="545.5" y="361.5" width="1" height="12.5" fill="#e8e8e8"/>
<text x="550.8" y="322.8" font-size="9.5" fill="#000" style="stroke-width:0.05px" textLength="38.1" lengthAdjust="spacingAndGlyphs">Красный:</text>
<rect x="607" y="312" width="21.5" height="12" fill="#fafafa" />
<rect x="607" y="312" width="21.5" height="1" fill="#555"/>
<rect x="607" y="312" width="1" height="12" fill="#555"/>
<text x="610" y="321.8" font-size="10" fill="#000" style="stroke-width:0.05px">0</text>
<defs><linearGradient id="sg0" x1="0" x2="1"><stop offset="0" stop-color="#000"/><stop offset="1" stop-color="#ff0000"/></linearGradient></defs>
<rect x="551" y="327.6" width="77.5" height="4.6" fill="url(#sg0)" />
<rect x="550" y="327.20000000000005" width="3" height="5.4" fill="#000" />
<rect x="551" y="328.3" width="1.2" height="3.2" fill="#f0f0f0" />
<text x="550.8" y="347.3" font-size="9.5" fill="#000" style="stroke-width:0.05px" textLength="37.4" lengthAdjust="spacingAndGlyphs">Зеленый:</text>
<rect x="607" y="336" width="21.5" height="12" fill="#fafafa" />
<rect x="607" y="336" width="21.5" height="1" fill="#555"/>
<rect x="607" y="336" width="1" height="12" fill="#555"/>
<text x="610" y="345.8" font-size="10" fill="#000" style="stroke-width:0.05px">0</text>
<defs><linearGradient id="sg1" x1="0" x2="1"><stop offset="0" stop-color="#000"/><stop offset="1" stop-color="#00ff00"/></linearGradient></defs>
<rect x="551" y="353.2" width="77.5" height="4.6" fill="url(#sg1)" />
<rect x="550" y="352.8" width="3" height="5.4" fill="#000" />
<rect x="551" y="353.9" width="1.2" height="3.2" fill="#f0f0f0" />
<text x="550.8" y="372.6" font-size="9.5" fill="#000" style="stroke-width:0.05px" textLength="26.6" lengthAdjust="spacingAndGlyphs">Синий:</text>
<rect x="607" y="362.3" width="21.5" height="12" fill="#fafafa" />
<rect x="607" y="362.3" width="21.5" height="1" fill="#555"/>
<rect x="607" y="362.3" width="1" height="12.0" fill="#555"/>
<text x="610" y="372.1" font-size="10" fill="#000" style="stroke-width:0.05px">0</text>
<defs><linearGradient id="sg2" x1="0" x2="1"><stop offset="0" stop-color="#000"/><stop offset="1" stop-color="#0000ff"/></linearGradient></defs>
<rect x="551" y="379.4" width="77.5" height="4.6" fill="url(#sg2)" />
<rect x="550" y="379.0" width="3" height="5.4" fill="#000" />
<rect x="551" y="380.09999999999997" width="1.2" height="3.2" fill="#f0f0f0" />
<rect x="527" y="387" width="109" height="1" fill="#b0b0b0"/>
<text x="531.6" y="402.8" font-size="9.5" fill="#000" style="stroke-width:0.05px" textLength="45.4" lengthAdjust="spacingAndGlyphs">Шест. цвет:</text>
<rect x="589.5" y="392.5" width="39" height="11.7" fill="#fafafa" />
<rect x="589.5" y="392.5" width="39.0" height="1" fill="#555"/>
<rect x="589.5" y="392.5" width="1" height="11.699999999999989" fill="#555"/>
<text x="591.5" y="402.5" font-size="10" fill="#000" letter-spacing="-0.2" style="stroke-width:0.05px">000000</text>
<rect x="1" y="415" width="638" height="1" fill="#a0a0a0"/>
<rect x="1" y="412" width="638" height="40" fill="#f9f9f9" />
<rect x="1" y="414.8" width="638" height="2" fill="#cdcdcd" />
<rect x="1" y="417" width="638" height="1" fill="#ffffff"/>
<rect x="6" y="418" width="24.5" height="14.5" fill="#050505" />
<rect x="6" y="418" width="24.5" height="1" fill="#4a4a4a"/>
<rect x="32.2" y="418" width="24.4" height="14.5" fill="#c6c6c6" />
<rect x="32.2" y="418" width="24.4" height="1" fill="#6a606a"/>
<rect x="32.2" y="418" width="1" height="14.5" fill="#6a606a"/>
<rect x="58.3" y="418" width="24.2" height="14.5" fill="#fafafa" />
<rect x="58.3" y="418" width="24.200000000000003" height="1" fill="#6a6a6a"/>
<rect x="58.3" y="418" width="1" height="14.5" fill="#6a6a6a"/>
<rect x="6.0" y="435.5" width="5.08125" height="15" fill="rgb(0,0,0)" />
<rect x="10.78125" y="435.5" width="5.08125" height="15" fill="rgb(15,15,15)" />
<rect x="15.5625" y="435.5" width="5.08125" height="15" fill="rgb(31,31,31)" />
<rect x="20.34375" y="435.5" width="5.08125" height="15" fill="rgb(47,47,47)" />
<rect x="25.125" y="435.5" width="5.08125" height="15" fill="rgb(63,63,63)" />
<rect x="29.90625" y="435.5" width="5.08125" height="15" fill="rgb(79,79,79)" />
<rect x="34.6875" y="435.5" width="5.08125" height="15" fill="rgb(95,95,95)" />
<rect x="39.46875" y="435.5" width="5.08125" height="15" fill="rgb(111,111,111)" />
<rect x="44.25" y="435.5" width="5.08125" height="15" fill="rgb(127,127,127)" />
<rect x="49.03125" y="435.5" width="5.08125" height="15" fill="rgb(143,143,143)" />
<rect x="53.8125" y="435.5" width="5.08125" height="15" fill="rgb(159,159,159)" />
<rect x="58.59375" y="435.5" width="5.08125" height="15" fill="rgb(175,175,175)" />
<rect x="63.375" y="435.5" width="5.08125" height="15" fill="rgb(191,191,191)" />
<rect x="68.15625" y="435.5" width="5.08125" height="15" fill="rgb(207,207,207)" />
<rect x="72.9375" y="435.5" width="5.08125" height="15" fill="rgb(223,223,223)" />
<rect x="77.71875" y="435.5" width="5.08125" height="15" fill="rgb(239,239,239)" />
<rect x="6" y="435.5" width="76.5" height="1" fill="#505050"/>
<defs>
<linearGradient id="hue" x1="0" x2="1">
<stop offset="0" stop-color="#ff0000"/><stop offset="0.2" stop-color="#ffff00"/>
<stop offset="0.4" stop-color="#00ff00"/><stop offset="0.6" stop-color="#00ffff"/>
<stop offset="0.8" stop-color="#0000ff"/><stop offset="1" stop-color="#ff00ff"/>
</linearGradient>
<linearGradient id="shade" x1="0" y1="0" x2="0" y2="1">
<stop offset="0" stop-color="#fff" stop-opacity="0.82"/>
<stop offset="0.35" stop-color="#fff" stop-opacity="0.42"/>
<stop offset="0.64" stop-color="#fff" stop-opacity="0"/>
<stop offset="0.64" stop-color="#000" stop-opacity="0"/>
<stop offset="1" stop-color="#000" stop-opacity="0.4"/>
</linearGradient></defs>
<rect x="84.5" y="419.5" width="273" height="30" fill="url(#hue)" />
<rect x="84.5" y="419.5" width="273" height="30" fill="url(#shade)" />
<rect x="84.5" y="418" width="273.0" height="1.6" fill="#5a5060"/>
<rect x="84" y="418" width="1.3" height="31.5" fill="#777"/>
<rect x="361" y="419" width="114" height="30" fill="#fafafa" />
<rect x="360.6" y="418.6" width="114.89999999999998" height="1" fill="#555"/>
<rect x="360.6" y="418.6" width="1" height="30.899999999999977" fill="#777"/>
<rect x="474.6" y="418.6" width="1" height="30.899999999999977" fill="#777"/>
<rect x="360.6" y="449" width="114.89999999999998" height="1" fill="#777"/>
<rect x="361" y="434" width="114" height="1" fill="#333"/>
<rect x="363" y="421" width="11.7" height="11.7" fill="#050505" />
<rect x="363" y="437" width="11.7" height="10.3" fill="#c6c6c6" />
<text x="378.9" y="429.6" font-size="8.9" fill="#000" style="stroke-width:0.05px" textLength="27.6" lengthAdjust="spacingAndGlyphs">clBlack</text>
<text x="378.9" y="444.9" font-size="8.9" fill="#000" style="stroke-width:0.05px" textLength="27.2" lengthAdjust="spacingAndGlyphs">clSilver</text>
<rect x="463" y="419" width="1" height="14" fill="#f0f0f0"/>
<path d="M465.8 425.2 L471.9 425.2 L468.85 429 Z" fill="#000"/>
<rect x="463" y="435" width="1" height="14" fill="#f0f0f0"/>
<path d="M465.8 441.2 L471.9 441.2 L468.85 445 Z" fill="#000"/>
<rect x="486.4" y="418.2" width="1" height="31.80000000000001" fill="#888"/>
<rect x="486.4" y="418.2" width="152.60000000000002" height="1" fill="#888"/>
<rect x="486.4" y="450" width="152.60000000000002" height="1" fill="#a0a0a0"/>
<rect x="560.5" y="419" width="1" height="31" fill="#e0e0e0"/>
<path d="M495 428.3 H503.3 M495 428.3 L501.8 422.2" stroke="#000" stroke-width="1.1" fill="none"/><path d="M500.3 424.5 Q501.8 426 501.5 428" stroke="#555" stroke-width="0.7" fill="none"/>
<path d="M495.2 441.3 L500.8 436.3 Q502.3 435.5 503 436.8 Q503.6 438 502.5 439 L497.2 443.8 Q495.6 444.5 494.9 443.3 Q494.4 442.2 495.2 441.3 Z" stroke="#000" stroke-width="1.1" fill="#fff"/><path d="M497.3 440 L499.5 442.3" stroke="#000" stroke-width="0.9"/><rect x="501.8" y="442.3" width="1.6" height="1.6" fill="#000"/>
<rect x="507" y="421" width="51" height="12" fill="#fafafa" />
<rect x="507" y="421" width="51" height="1" fill="#333"/>
<rect x="507" y="421" width="1" height="12" fill="#555"/>
<text x="509.2" y="430.7" font-size="10" fill="#000" style="stroke-width:0.05px">0</text>
<rect x="507" y="435" width="51" height="12" fill="#fafafa" />
<rect x="507" y="435" width="51" height="1" fill="#333"/>
<rect x="507" y="435" width="1" height="12" fill="#555"/>
<text x="509.2" y="444.7" font-size="10" fill="#000" style="stroke-width:0.05px">0</text>
<rect x="581" y="421" width="58" height="12" fill="#fafafa" />
<rect x="581" y="421" width="58" height="1" fill="#333"/>
<rect x="581" y="421" width="1" height="12" fill="#555"/>
<text x="583.2" y="430.7" font-size="10" fill="#000" style="stroke-width:0.05px" textLength="33.8" lengthAdjust="spacingAndGlyphs">479, 293</text>
<rect x="581" y="435" width="58" height="12" fill="#fafafa" />
<rect x="581" y="435" width="58" height="1" fill="#333"/>
<rect x="581" y="435" width="1" height="12" fill="#555"/>
<text x="583.2" y="444.7" font-size="10" fill="#000" style="stroke-width:0.05px" textLength="15.5" lengthAdjust="spacingAndGlyphs">0, 0</text>
<path d="M568.7 420.3 V431.8 M565 423.3 H577 M576.6 423.3 V431.8 M568.7 431.6 H577" stroke="#000" stroke-width="1" stroke-dasharray="1.6 1" fill="none"/>
<path d="M570.5 439 V448.2 M565 440.6 H577.2 M576.6 440.6 V448.2 M570.5 447.8 H577.2" stroke="#000" stroke-width="1" stroke-dasharray="1.6 1" fill="none"/>
<path d="M570.5 435.2 V438.2 M577 435.2 V438.2 M571 436.8 H576.5 M574.5 435.3 L576.5 436.8 L574.5 438.3" stroke="#000" stroke-width="0.9" fill="none"/>
<path d="M565.3 443 L568 447.5 M568 443 L565.3 447.5 M565 446 H568.5" stroke="#000" stroke-width="0.9" fill="none"/>
<rect x="1" y="452" width="638" height="1" fill="#a0a0a0"/>
<rect x="1" y="451" width="638" height="15" fill="#f9f9f9" />
<rect x="1" y="451.9" width="638" height="1" fill="#a0a0a0"/>
<rect x="1" y="453" width="638" height="1" fill="#ffffff"/>
<rect x="1" y="455" width="251" height="1" fill="#c8c8c8"/>
<rect x="1" y="455" width="1" height="11" fill="#b0b0b0"/>
<rect x="251" y="455" width="1" height="11" fill="#ffffff"/>
<rect x="255" y="455" width="54" height="1" fill="#c8c8c8"/>
<rect x="255" y="455" width="1" height="11" fill="#b0b0b0"/>
<rect x="308" y="455" width="1" height="11" fill="#ffffff"/>
<rect x="312" y="455" width="110.5" height="1" fill="#c8c8c8"/>
<rect x="312" y="455" width="1" height="11" fill="#b0b0b0"/>
<rect x="421.5" y="455" width="1" height="11" fill="#ffffff"/>
<rect x="425.6" y="455" width="62.39999999999998" height="1" fill="#c8c8c8"/>
<rect x="425.6" y="455" width="1" height="11" fill="#b0b0b0"/>
<rect x="487" y="455" width="1" height="11" fill="#ffffff"/>
<rect x="491" y="455" width="135" height="1" fill="#c8c8c8"/>
<rect x="491" y="455" width="1" height="11" fill="#b0b0b0"/>
<rect x="625" y="455" width="1" height="11" fill="#ffffff"/>
<text x="256.9" y="464.3" font-size="9.8" fill="#000" style="stroke-width:0.1px" textLength="31.9" lengthAdjust="spacingAndGlyphs">Окон: 1</text>
<text x="313.9" y="464.3" font-size="9.8" fill="#000" style="stroke-width:0.1px" textLength="106.7" lengthAdjust="spacingAndGlyphs">Размер картинки: 820Kb</text>
<text x="428" y="464.3" font-size="9.8" fill="#000" style="stroke-width:0.1px" textLength="37.5" lengthAdjust="spacingAndGlyphs">569 x 369</text>
<text x="493" y="464.3" font-size="9.8" fill="#000" style="stroke-width:0.1px" textLength="130.7" lengthAdjust="spacingAndGlyphs">Program Graphy Version 2.5.7.:</text>
<path d="M628 465 L637 456 M631 465 L637 459 M634 465 L637 462" stroke="#a0a0a0" stroke-width="1"/>
<text x="2.8" y="464.3" font-size="9.8" fill="#000" style="stroke-width:0.1px" textLength="109.8" lengthAdjust="spacingAndGlyphs">Для справки, нажмите F1</text>
<rect x="0" y="0" width="640" height="1" fill="#0d2a2e"/>
<rect x="0" y="0" width="1" height="467" fill="#0d2a2e"/>
<rect x="639" y="0" width="1" height="467" fill="#0d2a2e"/>
<rect x="0" y="466" width="640" height="1" fill="#0d2a2e"/>
</svg></body></html>
